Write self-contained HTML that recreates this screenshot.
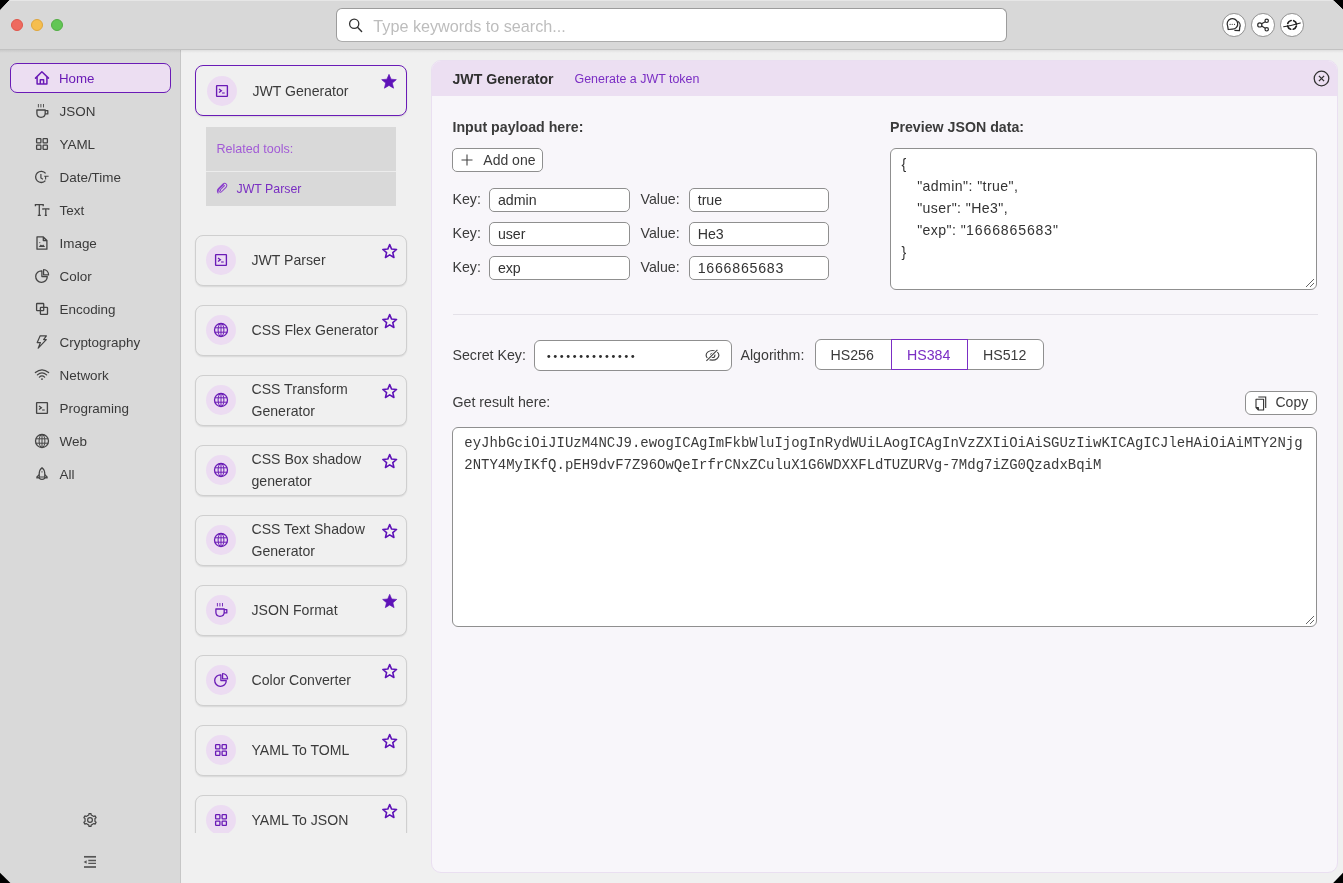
<!DOCTYPE html>
<html><head><meta charset="utf-8">
<style>
*{box-sizing:border-box;margin:0;padding:0}
html,body{width:1343px;height:883px;overflow:hidden;background:#000}
body{font-family:"Liberation Sans",sans-serif;color:#333;position:relative}
.abs{position:absolute}
#win{will-change:transform;position:absolute;left:0;top:0;width:1343px;height:883px;border-radius:0;overflow:hidden;background:#f0f0f0}
#title{position:absolute;left:0;top:0;width:1343px;height:50px;background:#d8d8d8;border-bottom:1px solid #c2c2c2}
.tl{position:absolute;top:18.7px;width:12.2px;height:12.2px;border-radius:50%}
#search{position:absolute;left:336.3px;top:8.2px;width:670.7px;height:34.2px;background:#fff;border:1px solid #9c9c9c;border-bottom-color:#acacac;border-radius:6px}
#search .ph{position:absolute;left:36px;top:7.5px;font-size:16.2px;color:#bdbdbd;white-space:nowrap}
.tb{position:absolute;top:13px;width:23.6px;height:23.6px;border-radius:50%;background:#fff;border:1px solid #8e8e8e}
.tb svg{position:absolute;left:0;top:0}
#side{position:absolute;left:0;top:50px;width:181px;height:833px;background:#d9d9d9;border-right:1px solid #c6c6c6}
.si{position:absolute;left:10px;width:161px;height:30px;border-radius:7px}
.si.on{background:#ecdef2;border:1.5px solid #6a1bb6}
.si svg{position:absolute;left:25px;top:8px}
.si span{position:absolute;left:49.5px;top:6px;font-size:13.3px;color:#3a3a3a;white-space:nowrap}
.si.on span{color:#6a1bb6;left:48px;top:7px}
.si.on svg{position:absolute;left:22.5px;top:5.6px}
.sl{position:absolute;left:59.5px;font-size:13.45px;color:#3a3a3a;white-space:nowrap;line-height:18px}
#mid{position:absolute;left:181px;top:50px;width:250px;height:783px;overflow:hidden}
.card{position:absolute;left:13.8px;width:212.2px;height:51px;border-radius:8px;border:1.5px solid #cfcfcf;background:#f0f0f0;box-shadow:0 1px 1.5px rgba(0,0,0,.10)}
.card.on{border:1.7px solid #6a1bb6}
.card.on .ic{left:11.2px;top:9.9px}
.card.on .tx{left:56.6px;top:0.6px}
.card .ic{position:absolute;left:10.2px;top:9.2px;width:30px;height:30px;border-radius:50%;background:#ecdcf2}
.card .ic svg{position:absolute;left:7px;top:7px}
.card .tx{position:absolute;left:55.7px;top:0;height:48px;display:flex;align-items:center;font-size:14.1px;line-height:22px;color:#3b3b3b;white-space:nowrap}
.card .st{position:absolute;left:185.5px;top:7px;width:17.4px;height:17.4px}
.card.on .st{left:184.5px;top:6.8px;width:18px;height:18px}
#panel{position:absolute;left:431px;top:60px;width:907px;height:813px;background:#f8f6fa;border:1px solid #eadff1;border-radius:10px;overflow:hidden}
#ph{position:absolute;left:0;top:0;width:907px;height:35px;background:#ecdff2}
.lbl{position:absolute;font-size:14.2px;color:#3b3b3b;white-space:nowrap;line-height:1}
.b{font-weight:bold}
.inp{position:absolute;background:#fff;border:1px solid #8f8f8f;border-radius:5px;height:23.6px;width:140.3px}
.inp span{position:absolute;left:7.5px;top:4px;font-size:14.2px;color:#333;white-space:nowrap;line-height:1}
.mono{font-family:"Liberation Mono",monospace}
</style></head><body>
<svg width="0" height="0" style="position:absolute">
<defs>
<symbol id="i-home" viewBox="0 0 16 16"><path d="M1.5 8.1 L7.9 1.8 L14.5 8.1 M3.1 6.7 V14.1 H12.9 V6.7 M6.3 14.1 V9.8 H9.6 V14.1" fill="none" stroke="currentColor" stroke-width="1.5" stroke-linejoin="round" stroke-linecap="round"/></symbol>
<symbol id="i-cup" viewBox="0 0 16 16"><path d="M4.4 1 V4.4 M6.9 1 V4.4 M9.5 1 V4.4" stroke="currentColor" stroke-width="0.9" fill="none"/><path d="M2.9 7 H11.2 V10.3 C11.2 12.8 9.4 14.3 7 14.3 C4.6 14.3 2.9 12.8 2.9 10.3 Z M11.2 7.6 H13.8 V10.9 H11.2" fill="none" stroke="currentColor" stroke-width="1.3" stroke-linejoin="round"/></symbol>
<symbol id="i-grid" viewBox="0 0 16 16"><g fill="none" stroke="currentColor" stroke-width="1.3"><rect x="2.6" y="2.6" width="4.3" height="4.3" rx="0.6"/><rect x="9.1" y="2.6" width="4.3" height="4.3" rx="0.6"/><rect x="2.6" y="9.1" width="4.3" height="4.3" rx="0.6"/><rect x="9.1" y="9.1" width="4.3" height="4.3" rx="0.6"/></g></symbol>
<symbol id="i-clock" viewBox="0 0 16 16"><path d="M11.6 4.4 A5.6 5.6 0 1 0 11.4 11.6" fill="none" stroke="currentColor" stroke-width="1.3"/><path d="M6.9 5 V9 L8.9 10.3" fill="none" stroke="currentColor" stroke-width="1.2"/><path d="M10.2 7.3 H14.6 M11.6 7.3 V10.6" fill="none" stroke="currentColor" stroke-width="1.1"/></symbol>
<symbol id="i-text" viewBox="0 0 16 16"><path d="M1.4 4.2 V2.6 H9.2 V4.2 M5.3 2.6 V13.4 M3.8 13.4 H6.8 M8.9 7.8 V6.8 H14.8 V7.8 M11.8 6.8 V13.4 M10.7 13.4 H12.9" fill="none" stroke="currentColor" stroke-width="1.3"/></symbol>
<symbol id="i-image" viewBox="0 0 16 16"><path d="M3 1.9 H9.3 L12.9 5.5 V14.2 H3 Z M9.3 1.9 V5.5 H12.9" fill="none" stroke="currentColor" stroke-width="1.3" stroke-linejoin="round"/><path d="M4.7 12.1 L6.8 9.4 L8.1 10.6 L9.2 9.5 L11.1 12.1 Z" fill="currentColor"/><circle cx="5.8" cy="7.6" r="0.55" fill="currentColor"/></symbol>
<symbol id="i-pie" viewBox="0 0 16 16"><path d="M7.9 2.8 A5.8 5.8 0 1 0 13.3 8.6 H7.9 Z" fill="none" stroke="currentColor" stroke-width="1.3" stroke-linejoin="round"/><path d="M9.6 1.5 V6.9 H14.6 A5.3 5.3 0 0 0 9.6 1.5 Z" fill="none" stroke="currentColor" stroke-width="1.2" stroke-linejoin="round"/></symbol>
<symbol id="i-enc" viewBox="0 0 16 16"><rect x="2.6" y="2.5" width="7.1" height="7.1" rx="0.6" fill="none" stroke="currentColor" stroke-width="1.3"/><rect x="6.4" y="6.3" width="7.1" height="7.1" rx="0.6" fill="none" stroke="currentColor" stroke-width="1.3"/></symbol>
<symbol id="i-bolt" viewBox="0 0 16 16"><path d="M6.2 1.8 H12.4 L9.6 5.6 H12.3 L4.2 14.2 L6.4 8.6 H3.2 Z" fill="none" stroke="currentColor" stroke-width="1.2" stroke-linejoin="round"/></symbol>
<symbol id="i-wifi" viewBox="0 0 16 16"><path d="M1.4 5.6 Q8 0 14.6 5.6 M3.4 7.9 Q8 3.8 12.6 7.9 M5.4 10.1 Q8 7.6 10.6 10.1" fill="none" stroke="currentColor" stroke-width="1.25" stroke-linecap="round"/><circle cx="8" cy="12.1" r="0.95" fill="currentColor"/></symbol>
<symbol id="i-term" viewBox="0 0 16 16"><rect x="2.6" y="2.6" width="10.8" height="10.8" rx="0.4" fill="none" stroke="currentColor" stroke-width="1.35"/><path d="M5 5.9 L7.4 7.7 L5 9.6" fill="none" stroke="currentColor" stroke-width="1.3"/><path d="M8.1 10 H10.7" stroke="currentColor" stroke-width="1.1"/></symbol>
<symbol id="i-globe" viewBox="0 0 16 16"><circle cx="8" cy="8" r="6.5" fill="none" stroke="currentColor" stroke-width="1.3"/><ellipse cx="8" cy="8" rx="2.9" ry="6.5" fill="none" stroke="currentColor" stroke-width="1"/><path d="M8 1.5 V14.5 M1.8 5.8 H14.2 M1.8 10.2 H14.2" fill="none" stroke="currentColor" stroke-width="1"/></symbol>
<symbol id="i-rocket" viewBox="0 0 16 16"><path d="M8 1.8 C10 3.3 10.8 5.5 10.8 8 V12.3 Q8 14.4 5.2 12.3 V8 C5.2 5.5 6 3.3 8 1.8 Z" fill="none" stroke="currentColor" stroke-width="1.25"/><path d="M5.2 8.7 L2.9 11 V12 L5.2 11.6 M10.8 8.7 L13.1 11 V12 L10.8 11.6 M5.2 11 H10.8" fill="none" stroke="currentColor" stroke-width="1.2" stroke-linejoin="round"/><path d="M7.3 5.9 H8.7" stroke="currentColor" stroke-width="0.9"/></symbol>
<symbol id="i-star" viewBox="0 0 16 16"><path d="M8 1.4 L9.75 5.6 L14.3 5.95 L10.85 8.9 L11.9 13.35 L8 10.95 L4.1 13.35 L5.15 8.9 L1.7 5.95 L6.25 5.6 Z" fill="none" stroke="currentColor" stroke-width="1.45" stroke-linejoin="round"/></symbol>
<symbol id="i-starf" viewBox="0 0 16 16"><path d="M8 1.2 L9.85 5.5 L14.5 5.9 L10.95 8.95 L12.05 13.5 L8 11.05 L3.95 13.5 L5.05 8.95 L1.5 5.9 L6.15 5.5 Z" fill="currentColor" stroke="currentColor" stroke-width="0.6" stroke-linejoin="round"/></symbol>
</defs></svg>
<div id="win">
  <div id="title">
    <div class="abs" style="left:0;top:0;width:1343px;height:1px;background:#e6e6e6"></div>
    <div class="tl" style="left:10.9px;background:#ee6a5f;border:0.5px solid #e0564b"></div>
    <div class="tl" style="left:30.9px;background:#f5be4f;border:0.5px solid #dfa63c"></div>
    <div class="tl" style="left:50.9px;background:#62c655;border:0.5px solid #52ad44"></div>
    <div id="search">
      <svg class="abs" style="left:11px;top:8.5px" width="16" height="16" viewBox="0 0 16 16"><circle cx="6.2" cy="5.8" r="4.6" fill="none" stroke="#333" stroke-width="1.3"/><path d="M9.5 9.3 L13.6 13.5" stroke="#333" stroke-width="1.45" stroke-linecap="round"/></svg>
      <div class="ph">Type keywords to search...</div>
    </div>
    <div class="tb" style="left:1222.2px;top:13.1px"><svg width="24" height="24" style="left:-1px;top:-1px"><g fill="none" stroke="#2b2b2b" stroke-width="1.25" stroke-linejoin="round"><path d="M6.2 16.5 L5.7 13.3 A5.3 5.3 0 1 1 10.5 16.2 Z"/><path d="M15.6 8.3 A4.9 4.9 0 0 1 17.7 14.6 L17.4 17.6 L12.4 17.4"/></g><g fill="#2b2b2b"><circle cx="8.1" cy="11.3" r="0.6"/><circle cx="10.2" cy="11.3" r="0.6"/><circle cx="12.5" cy="11.3" r="0.6"/></g></svg></div>
    <div class="tb" style="left:1251.1px;top:13.1px"><svg width="24" height="24" style="left:-1px;top:-1px"><g fill="none" stroke="#2b2b2b" stroke-width="1.2"><circle cx="8.8" cy="11.9" r="2.1"/><circle cx="15.7" cy="7.8" r="1.7"/><circle cx="15.7" cy="16.3" r="1.7"/><path d="M10.6 10.8 L14.3 8.7 M10.6 13 L14.3 15.3"/></g></svg></div>
    <div class="tb" style="left:1280.3px;top:13.1px"><svg width="24" height="24" style="left:-1px;top:-1px"><g fill="none" stroke="#222" stroke-linecap="round"><circle cx="12" cy="11.9" r="4.5" stroke-width="1.7" stroke-dasharray="4.4 2.67" stroke-dashoffset="-1.2"/><path d="M3.6 13.7 Q12 12.6 20.3 10" stroke-width="1.05"/></g></svg></div>
  </div>

  <div id="side">
<div class="si on" style="top:13px"><svg width="16" height="16" style="color:#6a1bb6"><use href="#i-home"/></svg><span>Home</span></div>
<svg class="abs" width="16" height="16" style="left:34px;top:53px;color:#444"><use href="#i-cup"/></svg><span class="sl" style="top:53px">JSON</span>
<svg class="abs" width="16" height="16" style="left:34px;top:86px;color:#444"><use href="#i-grid"/></svg><span class="sl" style="top:86px">YAML</span>
<svg class="abs" width="16" height="16" style="left:34px;top:119px;color:#444"><use href="#i-clock"/></svg><span class="sl" style="top:119px">Date/Time</span>
<svg class="abs" width="16" height="16" style="left:34px;top:152px;color:#444"><use href="#i-text"/></svg><span class="sl" style="top:152px">Text</span>
<svg class="abs" width="16" height="16" style="left:34px;top:185px;color:#444"><use href="#i-image"/></svg><span class="sl" style="top:185px">Image</span>
<svg class="abs" width="16" height="16" style="left:34px;top:218px;color:#444"><use href="#i-pie"/></svg><span class="sl" style="top:218px">Color</span>
<svg class="abs" width="16" height="16" style="left:34px;top:251px;color:#444"><use href="#i-enc"/></svg><span class="sl" style="top:251px">Encoding</span>
<svg class="abs" width="16" height="16" style="left:34px;top:284px;color:#444"><use href="#i-bolt"/></svg><span class="sl" style="top:284px">Cryptography</span>
<svg class="abs" width="16" height="16" style="left:34px;top:317px;color:#444"><use href="#i-wifi"/></svg><span class="sl" style="top:317px">Network</span>
<svg class="abs" width="16" height="16" style="left:34px;top:350px;color:#444"><use href="#i-term"/></svg><span class="sl" style="top:350px">Programing</span>
<svg class="abs" width="16" height="16" style="left:34px;top:383px;color:#444"><use href="#i-globe"/></svg><span class="sl" style="top:383px">Web</span>
<svg class="abs" width="16" height="16" style="left:34px;top:416px;color:#444"><use href="#i-rocket"/></svg><span class="sl" style="top:416px">All</span>
<svg class="abs" width="16" height="16" style="left:82px;top:762px"><path d="M6.13 3.36 L6.83 2.93 L6.98 1.58 L9.02 1.58 L9.17 2.93 L9.87 3.36 L11.08 4.06 L11.80 4.45 L13.05 3.91 L14.07 5.67 L12.97 6.48 L12.95 7.30 L12.95 8.70 L12.97 9.52 L14.07 10.33 L13.05 12.09 L11.80 11.55 L11.08 11.94 L9.87 12.64 L9.17 13.07 L9.02 14.42 L6.98 14.42 L6.83 13.07 L6.13 12.64 L4.92 11.94 L4.20 11.55 L2.95 12.09 L1.93 10.33 L3.03 9.52 L3.05 8.70 L3.05 7.30 L3.03 6.48 L1.93 5.67 L2.95 3.91 L4.20 4.45 L4.92 4.06 Z" fill="none" stroke="#444" stroke-width="1.2" stroke-linejoin="round"/><circle cx="8" cy="8" r="2.4" fill="none" stroke="#444" stroke-width="1.2"/></svg>
<svg class="abs" width="16" height="16" style="left:82px;top:804px"><path d="M2 2.8 H14 M13.9 2.8" stroke="#555" stroke-width="1.7"/><path d="M2 13 H14" stroke="#555" stroke-width="1.7"/><path d="M6.3 6.5 H14 M6.3 9.4 H14" stroke="#555" stroke-width="1.4"/><path d="M1.6 8 L4.6 6.2 V9.8 Z" fill="#555"/></svg>
</div>
  <div id="mid">
<div class="card on" style="top:15px"><div class="ic"><svg width="16" height="16" style="color:#6a1bb6"><use href="#i-term"/></svg></div><div class="tx">JWT Generator</div><svg class="st" width="16" height="16" style="color:#5e12b8"><use href="#i-starf"/></svg></div>
<div class="card" style="top:185px"><div class="ic"><svg width="16" height="16" style="color:#6a1bb6"><use href="#i-term"/></svg></div><div class="tx">JWT Parser</div><svg class="st" width="16" height="16" style="color:#5e12b8"><use href="#i-star"/></svg></div>
<div class="card" style="top:255px"><div class="ic"><svg width="16" height="16" style="color:#6a1bb6"><use href="#i-globe"/></svg></div><div class="tx">CSS Flex Generator</div><svg class="st" width="16" height="16" style="color:#5e12b8"><use href="#i-star"/></svg></div>
<div class="card" style="top:325px"><div class="ic"><svg width="16" height="16" style="color:#6a1bb6"><use href="#i-globe"/></svg></div><div class="tx">CSS Transform<br>Generator</div><svg class="st" width="16" height="16" style="color:#5e12b8"><use href="#i-star"/></svg></div>
<div class="card" style="top:395px"><div class="ic"><svg width="16" height="16" style="color:#6a1bb6"><use href="#i-globe"/></svg></div><div class="tx">CSS Box shadow<br>generator</div><svg class="st" width="16" height="16" style="color:#5e12b8"><use href="#i-star"/></svg></div>
<div class="card" style="top:465px"><div class="ic"><svg width="16" height="16" style="color:#6a1bb6"><use href="#i-globe"/></svg></div><div class="tx">CSS Text Shadow<br>Generator</div><svg class="st" width="16" height="16" style="color:#5e12b8"><use href="#i-star"/></svg></div>
<div class="card" style="top:535px"><div class="ic"><svg width="16" height="16" style="color:#6a1bb6"><use href="#i-cup"/></svg></div><div class="tx">JSON Format</div><svg class="st" width="16" height="16" style="color:#5e12b8"><use href="#i-starf"/></svg></div>
<div class="card" style="top:605px"><div class="ic"><svg width="16" height="16" style="color:#6a1bb6"><use href="#i-pie"/></svg></div><div class="tx">Color Converter</div><svg class="st" width="16" height="16" style="color:#5e12b8"><use href="#i-star"/></svg></div>
<div class="card" style="top:675px"><div class="ic"><svg width="16" height="16" style="color:#6a1bb6"><use href="#i-grid"/></svg></div><div class="tx">YAML To TOML</div><svg class="st" width="16" height="16" style="color:#5e12b8"><use href="#i-star"/></svg></div>
<div class="card" style="top:745px"><div class="ic"><svg width="16" height="16" style="color:#6a1bb6"><use href="#i-grid"/></svg></div><div class="tx">YAML To JSON</div><svg class="st" width="16" height="16" style="color:#5e12b8"><use href="#i-star"/></svg></div>
<div class="abs" style="left:25px;top:77px;width:190px;height:78.5px;background:#d9d9d9">
<div class="abs" style="left:0;top:43.5px;width:190px;height:1.2px;background:#ececec"></div>
<div class="abs" style="left:10.5px;top:15px;font-size:12.55px;color:#a25bd6;white-space:nowrap;line-height:14px">Related tools:</div>
<svg class="abs" style="left:10px;top:54.5px;color:#8a3fcc" width="12" height="12" viewBox="0 0 12 12"><path d="M7.6 2.6 L3.2 7 C2.3 7.9 2.5 9.1 3.2 9.7 C3.9 10.3 5 10.3 5.8 9.5 L10 5.3 C11.1 4.2 11 2.8 10.2 2 C9.4 1.2 8 1.1 6.9 2.2 L2.4 6.7 C1 8.1 1.1 10 2.2 11 M8.5 3.6 L4.6 7.5 C4.2 7.9 4.2 8.4 4.5 8.7" fill="none" stroke="currentColor" stroke-width="1.05" stroke-linecap="round"/></svg>
<div class="abs" style="left:30.5px;top:54.5px;font-size:12.35px;color:#7a2fc2;white-space:nowrap;line-height:14px">JWT Parser</div>
</div>
</div>
  <div class="abs" style="left:0;top:50px;width:1343px;height:3px;background:linear-gradient(rgba(0,0,0,0.07),rgba(0,0,0,0))"></div>
  <div id="panel">
    <div id="ph">
      <div class="lbl b" style="left:20.5px;top:10.5px;font-size:14.1px;color:#2e2e2e">JWT Generator</div>
      <div class="lbl" style="left:142.5px;top:11.5px;font-size:12.45px;color:#7b2ec4">Generate a JWT token</div>
      <svg class="abs" style="left:880.5px;top:8.5px" width="17" height="17" viewBox="0 0 17 17"><circle cx="8.5" cy="8.5" r="7.3" fill="none" stroke="#333" stroke-width="1.3"/><path d="M5.9 5.9 L11.1 11.1 M11.1 5.9 L5.9 11.1" stroke="#333" stroke-width="1.3"/></svg>
    </div>
    <div class="lbl b" style="left:20.5px;top:59px">Input payload here:</div>
    <div class="abs" style="left:20.3px;top:87.3px;width:91px;height:23.3px;border:1px solid #8f8f8f;border-radius:5px;background:#fff">
      <svg class="abs" style="left:8px;top:4.5px" width="12" height="12" viewBox="0 0 12 12"><path d="M6 0.5 V11.5 M0.5 6 H11.5" stroke="#444" stroke-width="1.1"/></svg>
      <div class="lbl" style="left:30px;top:3.5px;font-size:14px">Add one</div>
    </div>
    <div class="lbl" style="left:20.5px;top:130.5px">Key:</div>
    <div class="inp" style="left:57.4px;top:127.0px"><span>admin</span></div>
    <div class="lbl" style="left:208.5px;top:130.5px">Value:</div>
    <div class="inp" style="left:257.2px;top:127.0px"><span>true</span></div>
    <div class="lbl" style="left:20.5px;top:164.5px">Key:</div>
    <div class="inp" style="left:57.4px;top:161.0px"><span>user</span></div>
    <div class="lbl" style="left:208.5px;top:164.5px">Value:</div>
    <div class="inp" style="left:257.2px;top:161.0px"><span>He3</span></div>
    <div class="lbl" style="left:20.5px;top:198.5px">Key:</div>
    <div class="inp" style="left:57.4px;top:195.0px"><span>exp</span></div>
    <div class="lbl" style="left:208.5px;top:198.5px">Value:</div>
    <div class="inp" style="left:257.2px;top:195.0px"><span style="letter-spacing:0.75px">1666865683</span></div>
    <div class="lbl b" style="left:458px;top:59px">Preview JSON data:</div>
    <div class="abs" style="left:458px;top:87px;width:427px;height:142px;border:1px solid #8f8f8f;border-radius:6px;background:#fff">
      <div class="abs" style="left:10.5px;top:3.5px;font-size:14.1px;line-height:22px;color:#333;white-space:pre;letter-spacing:0.42px">{
<span style="letter-spacing:0">    </span>"admin": "true",
<span style="letter-spacing:0">    </span>"user": "He3",
<span style="letter-spacing:0">    </span>"exp": "<span style="letter-spacing:0.85px">1666865683</span>"
}</div>
      <svg class="abs" style="left:414px;top:129px" width="10" height="10" viewBox="0 0 10 10"><path d="M1 9 L9 1 M5 9 L9 5" stroke="#666" stroke-width="1"/></svg>
    </div>
    <div class="abs" style="left:20.5px;top:252.7px;width:865px;height:1px;background:#e4e1e8"></div>
    <div class="lbl" style="left:20.5px;top:286.5px">Secret Key:</div>
    <div class="abs" style="left:102px;top:278.5px;width:197.5px;height:31.5px;border:1px solid #8f8f8f;border-radius:6px;background:#fff">
      <svg class="abs" style="left:-1px;top:-1px" width="197" height="31"><circle cx="14.80" cy="16.50" r="1.45" fill="#2e2e2e"/><circle cx="21.26" cy="16.50" r="1.45" fill="#2e2e2e"/><circle cx="27.72" cy="16.50" r="1.45" fill="#2e2e2e"/><circle cx="34.18" cy="16.50" r="1.45" fill="#2e2e2e"/><circle cx="40.64" cy="16.50" r="1.45" fill="#2e2e2e"/><circle cx="47.10" cy="16.50" r="1.45" fill="#2e2e2e"/><circle cx="53.56" cy="16.50" r="1.45" fill="#2e2e2e"/><circle cx="60.02" cy="16.50" r="1.45" fill="#2e2e2e"/><circle cx="66.48" cy="16.50" r="1.45" fill="#2e2e2e"/><circle cx="72.94" cy="16.50" r="1.45" fill="#2e2e2e"/><circle cx="79.40" cy="16.50" r="1.45" fill="#2e2e2e"/><circle cx="85.86" cy="16.50" r="1.45" fill="#2e2e2e"/><circle cx="92.32" cy="16.50" r="1.45" fill="#2e2e2e"/><circle cx="98.78" cy="16.50" r="1.45" fill="#2e2e2e"/><g fill="none" stroke="#444" stroke-width="1.15"><ellipse cx="178.5" cy="15.3" rx="6.4" ry="4.8"/><circle cx="178.7" cy="15.4" r="2.1"/><path d="M172.2 21 L183.6 9.7" stroke="#fff" stroke-width="3"/><path d="M172.4 20.8 L183.4 9.9"/></g></svg>
    </div>
    <div class="lbl" style="left:308.5px;top:286.5px">Algorithm:</div>
    <div class="abs" style="left:382.5px;top:278px;width:229px;height:31px;border:1px solid #8f8f8f;border-radius:6px;background:#fff"></div>
    <div class="lbl" style="left:398.5px;top:286.5px">HS256</div>
    <div class="abs" style="left:458.5px;top:278px;width:77.5px;height:31px;border:1.5px solid #7b2ec4"></div>
    <div class="lbl" style="left:475px;top:286.5px;color:#7b2ec4">HS384</div>
    <div class="lbl" style="left:551px;top:286.5px">HS512</div>
    <div class="lbl" style="left:20.5px;top:333.5px">Get result here:</div>
    <div class="abs" style="left:813px;top:329.8px;width:72px;height:23.8px;border:1px solid #8f8f8f;border-radius:6px;background:#fff">
      <svg class="abs" style="left:9px;top:4px" width="12" height="15" viewBox="0 0 12 15"><path d="M3.3 1 H10.7 V12" fill="none" stroke="#333" stroke-width="1.1"/><path d="M1 3.2 H8.6 V14 H3.4 L1 11.6 Z M1 11.6 H3.4 V14" fill="none" stroke="#333" stroke-width="1.1" stroke-linejoin="round"/></svg>
      <div class="lbl" style="left:29.5px;top:3.5px;font-size:14px">Copy</div>
    </div>
    <div class="abs" style="left:20.3px;top:365.8px;width:865px;height:200.5px;border:1px solid #8f8f8f;border-radius:6px;background:#fff">
      <div class="abs mono" style="left:11px;top:4px;font-size:13.98px;line-height:22px;color:#3a3a3a;white-space:pre">eyJhbGciOiJIUzM4NCJ9.ewogICAgImFkbWluIjogInRydWUiLAogICAgInVzZXIiOiAiSGUzIiwKICAgICJleHAiOiAiMTY2Njg
2NTY4MyIKfQ.pEH9dvF7Z96OwQeIrfrCNxZCuluX1G6WDXXFLdTUZURVg-7Mdg7iZG0QzadxBqiM</div>
      <svg class="abs" style="left:852px;top:187px" width="10" height="10" viewBox="0 0 10 10"><path d="M1 9 L9 1 M5 9 L9 5" stroke="#666" stroke-width="1"/></svg>
    </div>
  </div>
</div>
<svg class="abs" style="left:0;top:0;z-index:10" width="1343" height="883"><g fill="#000"><path d="M0 0 H9.6 L0 10.2 Z"/><path d="M1332.8 0 H1343 V9.6 Z"/><path d="M1343 872.8 V883 H1333.2 Z"/><path d="M0 872.8 L10.4 883 H0 Z"/></g><g stroke="#e9e9e9" stroke-width="0.8" fill="none"><path d="M9.6 0.4 L0.4 10.2"/><path d="M1333.2 0.4 L1342.6 9.6"/></g></svg>
</body></html>
